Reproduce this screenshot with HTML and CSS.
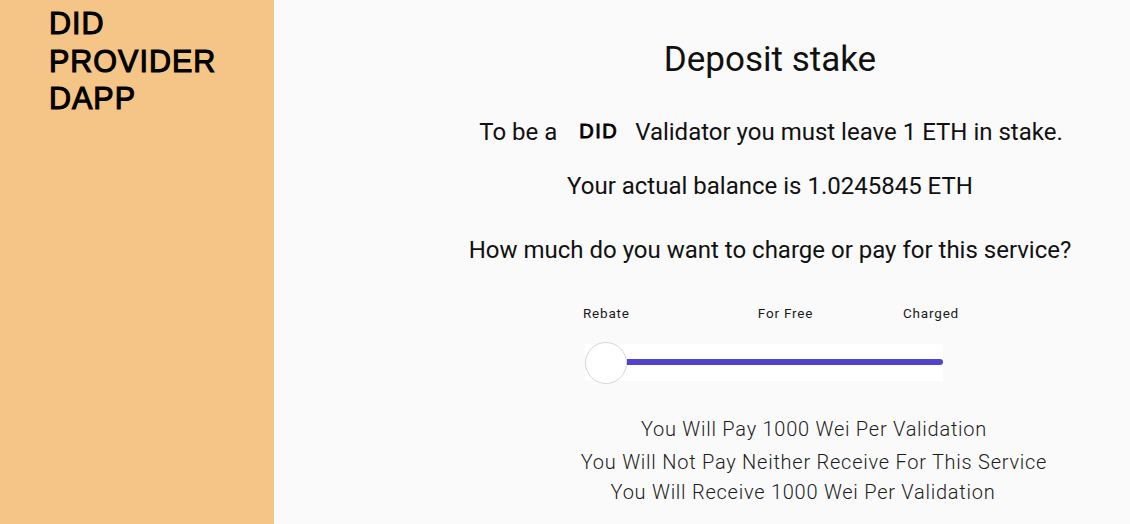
FILE: index.html
```html
<!DOCTYPE html>
<html>
<head>
<meta charset="utf-8">
<link rel="stylesheet" href="styles.css">
</head>
<body>
<div class="app">
  <aside class="sidebar">
    <div class="brand">DID<br>PROVIDER<br>DAPP</div>
  </aside>
  <main class="main">
    <h1 class="title">Deposit stake</h1>
    <p class="line line--intro">To be a <span class="did">DID</span> Validator you must leave 1 ETH in stake.</p>
    <p class="line line--balance">Your actual balance is 1.0245845 ETH</p>
    <p class="line line--question">How much do you want to charge or pay for this service?</p>
    <div class="slider-block">
      <div class="labels">
        <span class="label label--rebate">Rebate</span>
        <span class="label label--free">For Free</span>
        <span class="label label--charged">Charged</span>
      </div>
      <div class="slider">
        <div class="thumb"></div>
        <div class="track"></div>
      </div>
    </div>
    <div class="results">
      <p class="result result--pay">You Will Pay 1000 Wei Per Validation</p>
      <p class="result result--none">You Will Not Pay Neither Receive For This Service</p>
      <p class="result result--receive">You Will Receive 1000 Wei Per Validation</p>
    </div>
  </main>
</div>
</body>
</html>
```

FILE: styles.css
```css
* { box-sizing: border-box; }
html, body {
  margin: 0;
  padding: 0;
  width: 1130px;
  height: 524px;
  overflow: hidden;
  background: #fafafa;
}
.app {
  display: flex;
  height: 524px;
}
.sidebar {
  width: 274px;
  flex: none;
  background: #f5c587;
  padding: 5px 0 0 49px;
}
.brand {
  font-family: "Liberation Sans", Arial, sans-serif;
  font-size: 30.5px;
  line-height: 37.5px;
  letter-spacing: 1px;
  color: #000;
  -webkit-text-stroke: 1.1px #000;
}
.main {
  flex: 1;
  display: flex;
  flex-direction: column;
  align-items: center;
  padding-left: 136px;
  font-family: Roboto, "Noto Sans", sans-serif;
  color: #111;
}
.title {
  margin: 39px 0 0;
  font-size: 35px;
  font-weight: 400;
  line-height: 42px;
}
.line {
  margin: 0;
  font-size: 24px;
  line-height: 30px;
}
.line--intro { margin-top: 36px; margin-left: 2px; }
.line--balance { margin-top: 23px; }
.line--question { margin-top: 34px; }
.did {
  font-family: "Liberation Sans", Arial, sans-serif;
  font-size: 20px;
  font-weight: 400;
  letter-spacing: 1.5px;
  -webkit-text-stroke: 0.9px #000;
  color: #000;
  margin: 0 11px 0 16px;
  position: relative;
  top: -2px;
}
.slider-block {
  margin-top: 40px;
  margin-left: -7px;
  display: flex;
  flex-direction: column;
  width: 375px;
}
.labels {
  display: flex;
  font-size: 13.5px;
  line-height: 16px;
  letter-spacing: 0.8px;
  color: #1a1a1a;
  padding-left: 4px;
}
.label--free { margin-left: 128px; }
.label--charged { margin-left: auto; margin-right: -5px; }
.slider {
  margin-top: 23px;
  margin-left: 6px;
  width: 358px;
  height: 37px;
  background: #fff;
  display: flex;
  align-items: center;
}
.thumb {
  width: 42px;
  height: 42px;
  flex: none;
  border-radius: 50%;
  background: #fff;
  border: 1.5px solid #d6d6d6;
}
.track {
  flex: 1;
  height: 6px;
  margin-top: -2px;
  background: #5143cb;
  border-radius: 0 3px 3px 0;
}
.results {
  margin-top: 32px;
  display: flex;
  flex-direction: column;
  align-items: center;
  padding-left: 88px;
}
.result {
  margin: 0;
  font-size: 20px;
  font-weight: 300;
  letter-spacing: 0.75px;
  color: #1c1c1c;
  line-height: 32px;
}
.result--none { margin-top: 1px; }
.result--receive { margin-right: 22px; margin-top: -2px; }
```
